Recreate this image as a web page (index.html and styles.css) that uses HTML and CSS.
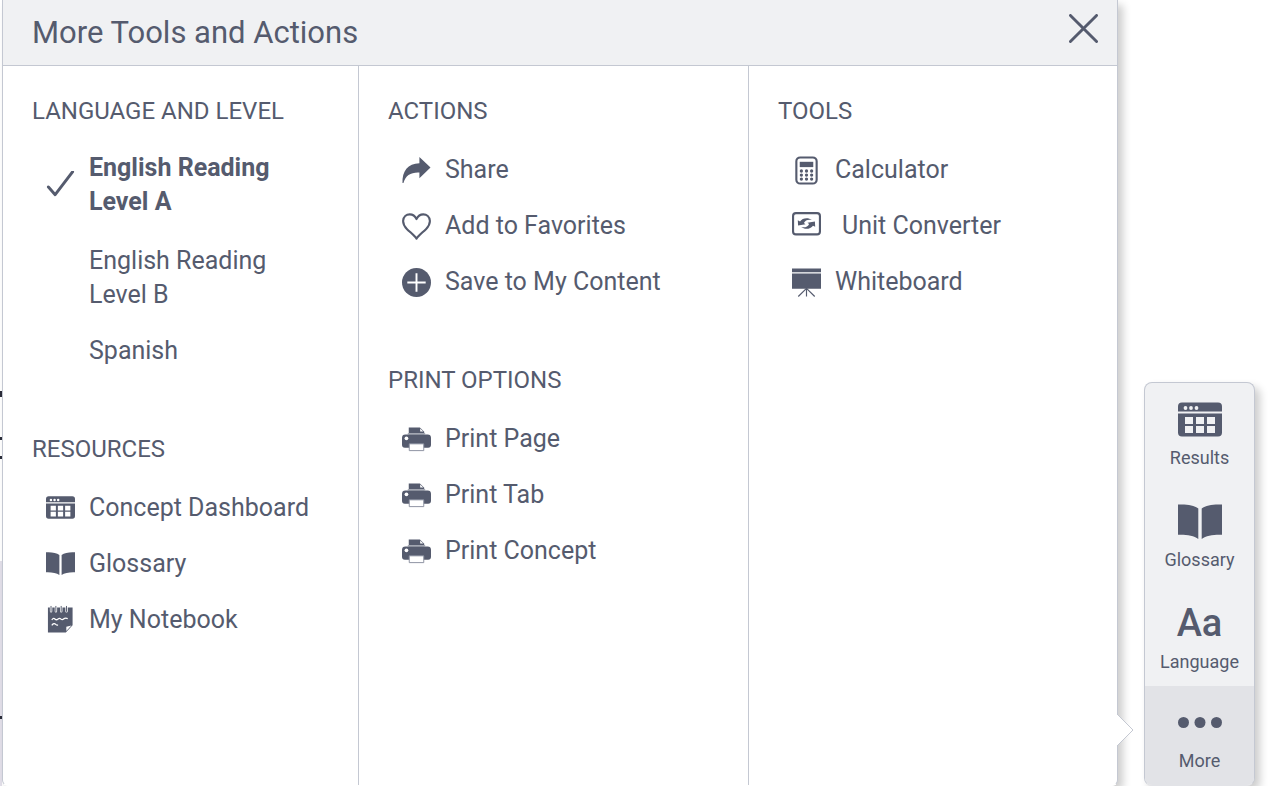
FILE: index.html
```html
<!DOCTYPE html>
<html lang="en">
<head>
<meta charset="utf-8">
<meta name="viewport" content="width=device-width, initial-scale=1">
<title>More Tools and Actions</title>
<link rel="stylesheet" href="styles.css">
</head>
<body>
<svg class="sprite" aria-hidden="true">
  <symbol id="i-dashboard" viewBox="0 0 44 34">
    <path d="M4 0H40a4 4 0 0 1 4 4V9H0V4a4 4 0 0 1 4-4z"/>
    <path fill-rule="evenodd" d="M0 11H44V30a4 4 0 0 1-4 4H4a4 4 0 0 1-4-4zM7 14.5v7h8v-7zM18 14.5v7h8v-7zM29 14.5v7h8v-7zM7 23.500v7h8v-7zM18 23.500v7h8v-7zM29 23.500v7h8v-7z"/>
    <g class="knockout"><circle cx="7.500" cy="5.500" r="1.900"/><circle cx="13" cy="5.500" r="1.900"/><circle cx="18.500" cy="5.500" r="1.900"/></g>
  </symbol>
  <symbol id="i-book" viewBox="0 0 44 35">
    <path d="M0 .5C8 0 16 1 20.300 4.500V35C16 31.500 8 30.500 0 30.800zM44 .5C36 0 28 1 23.700 4.500V35C28 31.500 36 30.500 44 30.800z"/>
  </symbol>
  <symbol id="i-notebook" viewBox="0 0 30 30">
    <path d="M2 2.500H4V6.500a1 1 0 0 0 2.500 0V2.500H9V6.500a1 1 0 0 0 2.500 0V2.500H14.500V6.500a1 1 0 0 0 2.500 0V2.500H20V6.500a1 1 0 0 0 2.500 0V2.500H27.500V21L20.500 28.500H2z"/>
    <path class="line" stroke-width="1" d="M5.200 1V7M10.200 1V7M15.700 1V7M21.200 1V7"/>
    <path class="knockout-line" stroke-width="1.300" d="M6 15.500c1.500-2.200 2.500-1.800 3.500-.8s2 .6 3-.2 2-.8 3 .1 2 .6 3-.3 2-.8 4-.3M6 21c1.500-2 3-2 4-1s1.500.8 2.500.8"/>
    <path class="knockout" d="M21 27V22.500L26.300 21.300z"/>
  </symbol>
  <symbol id="i-check" viewBox="0 3 30 30">
    <path class="line" stroke-width="3" stroke-linecap="round" stroke-linejoin="round" d="M2.500 19.500 9.500 27.500 27.500 3.800"/>
  </symbol>
  <symbol id="i-share" viewBox="0 0 30 30">
    <path d="M18 1 29.500 12 18 23V17C9.500 16.500 3.500 20 1.500 28H.5C0 16 6 7.500 18 7.500z"/>
  </symbol>
  <symbol id="i-heart" viewBox="0 0 30 30">
    <path class="line" stroke-width="2.200" stroke-linejoin="round" d="M15 27.500C13 24.500 8.500 21 5 17.500 1.500 14 1 11.500 1.200 9 1.500 5 4.500 2.400 8 2.400c3.200 0 5.500 1.800 7 5 1.500-3.200 3.800-5 7-5 3.500 0 6.500 2.600 6.800 6.600.2 2.500-.3 5-3.800 8.500C21.500 21 17 24.500 15 27.500z"/>
  </symbol>
  <symbol id="i-plus" viewBox="0 0 30 30">
    <circle cx="15" cy="15" r="15"/>
    <path class="knockout-line" stroke-width="2" d="M5.500 15H24.500M15 5.500V24.500"/>
  </symbol>
  <symbol id="i-printer" viewBox="0 0 30 30">
    <path d="M7 2.500H18.500L23 7V9.500H7z"/>
    <path class="knockout" d="M18.800 3.500V6.800H22z"/>
    <path class="soft" d="M6 8.300H24V9.700H6z"/>
    <path d="M3.500 9.700H26.500a3.500 3.500 0 0 1 3.500 3.500V20.500a3 3 0 0 1-3 3H3a3 3 0 0 1-3-3V13.200a3.500 3.500 0 0 1 3.500-3.500z"/>
    <circle class="knockout" cx="4.600" cy="13.800" r="1.900"/>
    <path class="sheet" d="M7.500 19.500H22.500V26.500H7.500z"/>
  </symbol>
  <symbol id="i-calculator" viewBox="0 0 30 30">
    <rect class="line" stroke-width="2.200" x="4.500" y="1.500" width="21" height="27" rx="4"/>
    <path d="M8 6H22V11.500H8z"/>
    <g><circle cx="9.700" cy="15.500" r="1.700"/><circle cx="15" cy="15.500" r="1.700"/><circle cx="20.300" cy="15.500" r="1.700"/><circle cx="9.700" cy="19.700" r="1.700"/><circle cx="15" cy="19.700" r="1.700"/><circle cx="20.300" cy="19.700" r="1.700"/><circle cx="9.700" cy="23.900" r="1.700"/><circle cx="15" cy="23.900" r="1.700"/><circle cx="20.300" cy="23.900" r="1.700"/></g>
  </symbol>
  <symbol id="i-convert" viewBox="0 0 30 30">
    <rect class="line" stroke-width="2.200" x="1.100" y="1.100" width="27.800" height="22" rx="3"/>
    <path d="M6 8.500 8.300 9.700C10.500 6.300 16.500 5 20.500 8.200 16.500 7.500 13.500 8.500 12.300 11.500L14 12.700 6.300 14zM24 15.300 21.700 14.100C19.500 17.500 13.500 18.800 9.500 15.600 13.500 16.300 16.500 15.300 17.700 12.300L16 11.100 23.700 9.800z"/>
  </symbol>
  <symbol id="i-whiteboard" viewBox="0 0 30 30">
    <path d="M0 .5H30V4.500H0zM0 5.800H30V21.500H0z"/>
    <path class="line" stroke-width="1.200" d="M15 20V29.500M15 21 6.500 29.500M15 21 23.500 29.500"/>
  </symbol>
  <symbol id="i-close" viewBox="0 0 30 30">
    <path class="line" stroke-width="3" stroke-linecap="round" d="M1.500 1.500 28.500 28.500M28.500 1.500 1.500 28.500"/>
  </symbol>
  <symbol id="i-dots" viewBox="0 0 44 12">
    <circle cx="5.500" cy="6" r="5.500"/><circle cx="22" cy="6" r="5.500"/><circle cx="38.500" cy="6" r="5.500"/>
  </symbol>
</svg>

<div class="layout">
  <div class="page-edge" aria-hidden="true">
    <i class="mark mark-1"></i><i class="mark mark-2"></i><i class="mark mark-3"></i><i class="mark mark-4"></i>
  </div>

  <section class="panel" aria-labelledby="panel-title">
    <header class="panel-header">
      <h1 id="panel-title">More Tools and Actions</h1>
      <button class="close" type="button" aria-label="Close"><svg class="icon"><use href="#i-close"/></svg></button>
    </header>
    <div class="columns">
      <div class="column">
        <section class="group">
          <h2>LANGUAGE AND LEVEL</h2>
          <ul>
            <li class="selected"><button class="item" type="button" aria-pressed="true"><svg class="icon"><use href="#i-check"/></svg><span class="level">English Reading Level A</span></button></li>
            <li><button class="item indented" type="button"><span class="level">English Reading Level B</span></button></li>
            <li><button class="item indented" type="button"><span class="level">Spanish</span></button></li>
          </ul>
        </section>
        <section class="group">
          <h2>RESOURCES</h2>
          <ul>
            <li><a class="item" href="#dashboard"><svg class="icon"><use href="#i-dashboard"/></svg><span>Concept Dashboard</span></a></li>
            <li><a class="item" href="#glossary"><svg class="icon"><use href="#i-book"/></svg><span>Glossary</span></a></li>
            <li><a class="item" href="#notebook"><svg class="icon"><use href="#i-notebook"/></svg><span>My Notebook</span></a></li>
          </ul>
        </section>
      </div>
      <div class="column">
        <section class="group">
          <h2>ACTIONS</h2>
          <ul>
            <li><button class="item" type="button"><svg class="icon"><use href="#i-share"/></svg><span>Share</span></button></li>
            <li><button class="item" type="button"><svg class="icon"><use href="#i-heart"/></svg><span>Add to Favorites</span></button></li>
            <li><button class="item" type="button"><svg class="icon"><use href="#i-plus"/></svg><span>Save to My Content</span></button></li>
          </ul>
        </section>
        <section class="group">
          <h2>PRINT OPTIONS</h2>
          <ul>
            <li><button class="item" type="button"><svg class="icon"><use href="#i-printer"/></svg><span>Print Page</span></button></li>
            <li><button class="item" type="button"><svg class="icon"><use href="#i-printer"/></svg><span>Print Tab</span></button></li>
            <li><button class="item" type="button"><svg class="icon"><use href="#i-printer"/></svg><span>Print Concept</span></button></li>
          </ul>
        </section>
      </div>
      <div class="column">
        <section class="group">
          <h2>TOOLS</h2>
          <ul>
            <li><button class="item" type="button"><svg class="icon"><use href="#i-calculator"/></svg><span>Calculator</span></button></li>
            <li><button class="item spaced" type="button"><svg class="icon"><use href="#i-convert"/></svg><span>Unit Converter</span></button></li>
            <li><button class="item" type="button"><svg class="icon"><use href="#i-whiteboard"/></svg><span>Whiteboard</span></button></li>
          </ul>
        </section>
      </div>
    </div>
    <svg class="caret" viewBox="0 0 17 30" aria-hidden="true"><path class="caret-fill" d="M0 0H1L16 15 1 30H0z"/><path class="caret-edge" d="M1 0 16 15 1 30"/></svg>
  </section>

  <nav class="rail" aria-label="Quick tools">
    <button class="rail-item" type="button"><span class="rail-icon"><svg><use href="#i-dashboard"/></svg></span>Results</button>
    <button class="rail-item" type="button"><span class="rail-icon"><svg><use href="#i-book"/></svg></span>Glossary</button>
    <button class="rail-item compact" type="button"><span class="rail-icon letters" aria-hidden="true">Aa</span>Language</button>
    <button class="rail-item compact active" type="button" aria-expanded="true"><span class="rail-icon"><svg><use href="#i-dots"/></svg></span>More</button>
  </nav>
</div>
</body>
</html>
```

FILE: styles.css
```css
:root {
  --ink: #555b6e;
  --edge: #c4c8d2;
  --surface: #f0f1f3;
  --surface-active: #e2e3e7;
  --cut: #fff;
}

* {
  box-sizing: border-box;
}

body {
  margin: 0;
  background: #fff;
  color: var(--ink);
  font-family: Roboto, "Liberation Sans", sans-serif;
  font-size: 25px;
  line-height: 34px;
}

h1,
h2,
ul {
  margin: 0;
  padding: 0;
  font-weight: 400;
}

ul {
  list-style: none;
}

button,
a {
  border: 0;
  padding: 0;
  background: none;
  color: inherit;
  font: inherit;
  text-align: left;
  text-decoration: none;
  cursor: pointer;
}

svg {
  display: block;
  fill: var(--ink);
}

.sprite {
  position: absolute;
  width: 0;
  height: 0;
}

.line {
  fill: none;
  stroke: var(--ink);
}

.knockout {
  fill: var(--cut);
}

.knockout-line {
  fill: none;
  stroke: var(--cut);
}

.soft {
  fill: #a3a7b2;
}

.sheet {
  fill: #fff;
  stroke: #8b90a0;
}

.layout {
  display: flex;
  min-height: 100vh;
  padding-right: 23px;
  overflow: hidden;
}

/* Sliver of the article that stays visible beside the panel */
.page-edge {
  position: relative;
  width: 2px;
  background: linear-gradient(#fff 561px, #e2dfe9 561px);
}

.mark {
  position: absolute;
  left: 0;
  width: 2px;
  height: 3px;
  background: #2b2d3a;
}

.mark-1 { top: 391px; height: 6px; }
.mark-2 { top: 437px; }
.mark-3 { top: 456px; }
.mark-4 { top: 716px; }

.panel {
  position: relative;
  flex: 1;
  display: flex;
  flex-direction: column;
  margin-right: 26px;
  border: 1px solid var(--edge);
  border-top: 0;
  border-bottom-color: #fff;
  border-radius: 0 0 6px 6px;
  background: #fff;
  box-shadow: 5px 5px 8px rgba(0, 0, 0, 0.2);
}

.panel-header {
  display: flex;
  align-items: flex-start;
  justify-content: space-between;
  padding: 14px 19px 13px 29px;
  border-bottom: 1px solid var(--edge);
  background: var(--surface);
}

h1 {
  font-size: 31px;
  line-height: 38px;
}

.columns {
  flex: 1;
  display: grid;
  grid-template-columns: 355fr 390fr 369fr;
}

.column {
  display: flex;
  flex-direction: column;
  gap: 64px;
  padding: 28px 29px;
}

.column + .column {
  border-left: 1px solid var(--edge);
}

h2 {
  font-size: 24px;
  line-height: 34px;
}

.group ul {
  display: flex;
  flex-direction: column;
  gap: 22px;
  margin-top: 25px;
}

.item {
  display: flex;
  align-items: center;
  gap: 14px;
  padding-left: 14px;
  white-space: nowrap;
}

.icon {
  flex: none;
  width: 29px;
  height: 29px;
}

a .icon {
  margin-bottom: 2px;
}

.selected {
  margin: -2px 0 3px;
  font-weight: 700;
}

.indented {
  padding-left: 57px;
}

.level {
  max-width: 200px;
  white-space: normal;
}

.spaced {
  gap: 21px;
}

.caret {
  position: absolute;
  right: -17px;
  bottom: 40px;
  width: 17px;
  height: 30px;
}

.caret-fill {
  fill: #fff;
}

.caret-edge {
  fill: none;
  stroke: var(--edge);
}

.rail {
  --cut: var(--surface);
  align-self: flex-end;
  display: flex;
  flex-direction: column;
  width: 111px;
  border: 1px solid var(--edge);
  border-bottom-color: var(--surface-active);
  border-radius: 8px;
  background: var(--surface);
  box-shadow: 5px 5px 8px rgba(0, 0, 0, 0.2);
  overflow: hidden;
}

.rail-item {
  display: flex;
  flex-direction: column;
  align-items: center;
  gap: 5px;
  padding: 14px 0 15px;
  font-size: 18px;
  line-height: 24px;
}

.rail-icon {
  display: flex;
  align-items: center;
  height: 44px;
}

.rail-icon svg {
  width: 44px;
  height: 35px;
}

.letters {
  font-size: 38px;
  font-weight: 500;
}

.compact {
  padding-bottom: 12px;
}

.active {
  background: var(--surface-active);
}
```
